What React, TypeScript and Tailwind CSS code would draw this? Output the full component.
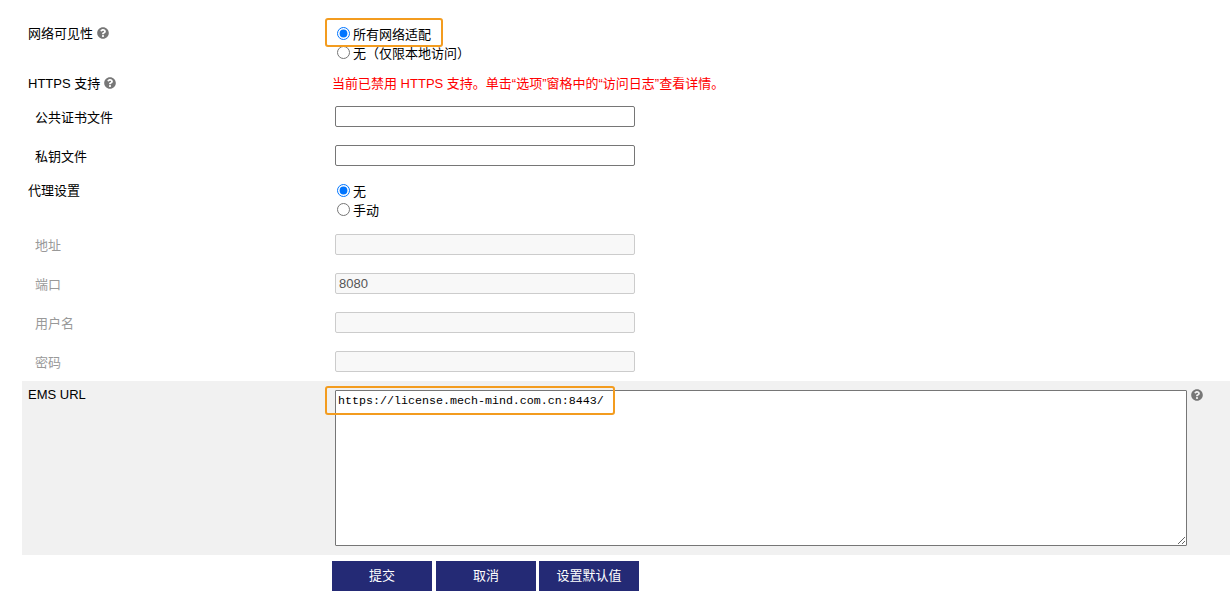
import React from 'react'
import { FaQuestionCircle } from 'react-icons/fa'

const font = "font-['Liberation_Sans','Noto_Sans_CJK_SC',sans-serif]"

function Help() {
  return <FaQuestionCircle className="inline-block text-[#777] ml-[4px] align-[-1px]" size={12} />
}

function Radio({ label, checked, name }: { label: string; checked?: boolean; name: string }) {
  return (
    <label className="flex items-center h-[20px] pl-[5px]">
      <input type="radio" name={name} defaultChecked={checked} className="w-[13px] h-[13px] mt-[-1px]" />
      <span className="ml-[3px] mt-[1px]">{label}</span>
    </label>
  )
}

function Field({ label, disabled, value }: { label: string; disabled?: boolean; value?: string }) {
  return (
    <div className="flex h-[39px] items-center">
      <div className={`w-[313px] pl-[13px] pt-[2px] ${disabled ? 'text-[#999]' : ''}`}>{label}</div>
      <input
        type="text"
        disabled={disabled}
        defaultValue={value}
        className={
          disabled
            ? 'w-[300px] h-[21px] px-[3px] rounded-[2px] border border-[#ccc] bg-[#f8f8f8] text-[#555] text-[13px]'
            : 'w-[300px] h-[21px] px-[3px] rounded-[2px] border border-[#767676] bg-white'
        }
      />
    </div>
  )
}

function SubmitButton({ label }: { label: string }) {
  return (
    <button className="w-[100px] h-[30px] bg-[#242a75] text-white text-[13px]">{label}</button>
  )
}

export default function App() {
  return (
    <div className={`relative w-[1230px] h-[612px] bg-white text-[13px] text-black overflow-hidden ${font}`}>
      <div className="pl-[22px] pt-[24px]">
        {/* network visibility */}
        <div className="flex">
          <div className="w-[310px] pl-[6px] leading-[20px]">
            网络可见性<Help />
          </div>
          <div>
            <Radio name="network" label="所有网络适配" checked />
            <div className="mt-[-1px]">
              <Radio name="network" label="无（仅限本地访问）" />
            </div>
          </div>
        </div>

        {/* https */}
        <div className="flex h-[20px] mt-[11px] items-center">
          <div className="w-[310px] pl-[6px]">
            HTTPS 支持<Help />
          </div>
          <div className="text-[#ff0000]">当前已禁用 HTTPS 支持。单击“选项”窗格中的“访问日志”查看详情。</div>
        </div>

        <div className="mt-[3px]">
          <Field label="公共证书文件" />
          <Field label="私钥文件" />
        </div>

        {/* proxy */}
        <div className="flex mt-[5px]">
          <div className="w-[310px] pl-[6px] pt-[1px] leading-[20px]">代理设置</div>
          <div className="pt-[1px]">
            <Radio name="proxy" label="无" checked />
            <div className="mt-[-1px]">
              <Radio name="proxy" label="手动" />
            </div>
          </div>
        </div>

        <div className="mt-[5px]">
          <Field label="地址" disabled />
          <Field label="端口" disabled value="8080" />
          <Field label="用户名" disabled />
          <Field label="密码" disabled />
        </div>

        {/* ems url */}
        <div className="flex h-[174px] bg-[#f1f1f1] pt-[9px]">
          <div className="w-[313px] pl-[6px] mt-[-5px] leading-[20px]">EMS URL</div>
          <textarea
            defaultValue="https://license.mech-mind.com.cn:8443/"
            className="w-[852px] h-[156px] border border-[#767676] bg-white px-[2px] py-[2px] rounded-[1px] font-['Liberation_Mono',monospace] text-[11.67px] leading-[16px] resize"
          />
          <FaQuestionCircle className="text-[#777] ml-[4px] mt-[-1px]" size={12} />
        </div>

        <div className="flex gap-[4px] pl-[310px] mt-[6px]">
          <SubmitButton label="提交" />
          <SubmitButton label="取消" />
          <div className="ml-[-1px]">
            <SubmitButton label="设置默认值" />
          </div>
        </div>
      </div>

      {/* callouts over the screenshot */}
      <div className="absolute left-[325px] top-[18px] w-[118px] h-[29px] border-2 border-[#f39c1f] rounded-[3px]" />
      <div className="absolute left-[325px] top-[386px] w-[290px] h-[29px] border-2 border-[#f39c1f] rounded-[3px]" />
    </div>
  )
}
